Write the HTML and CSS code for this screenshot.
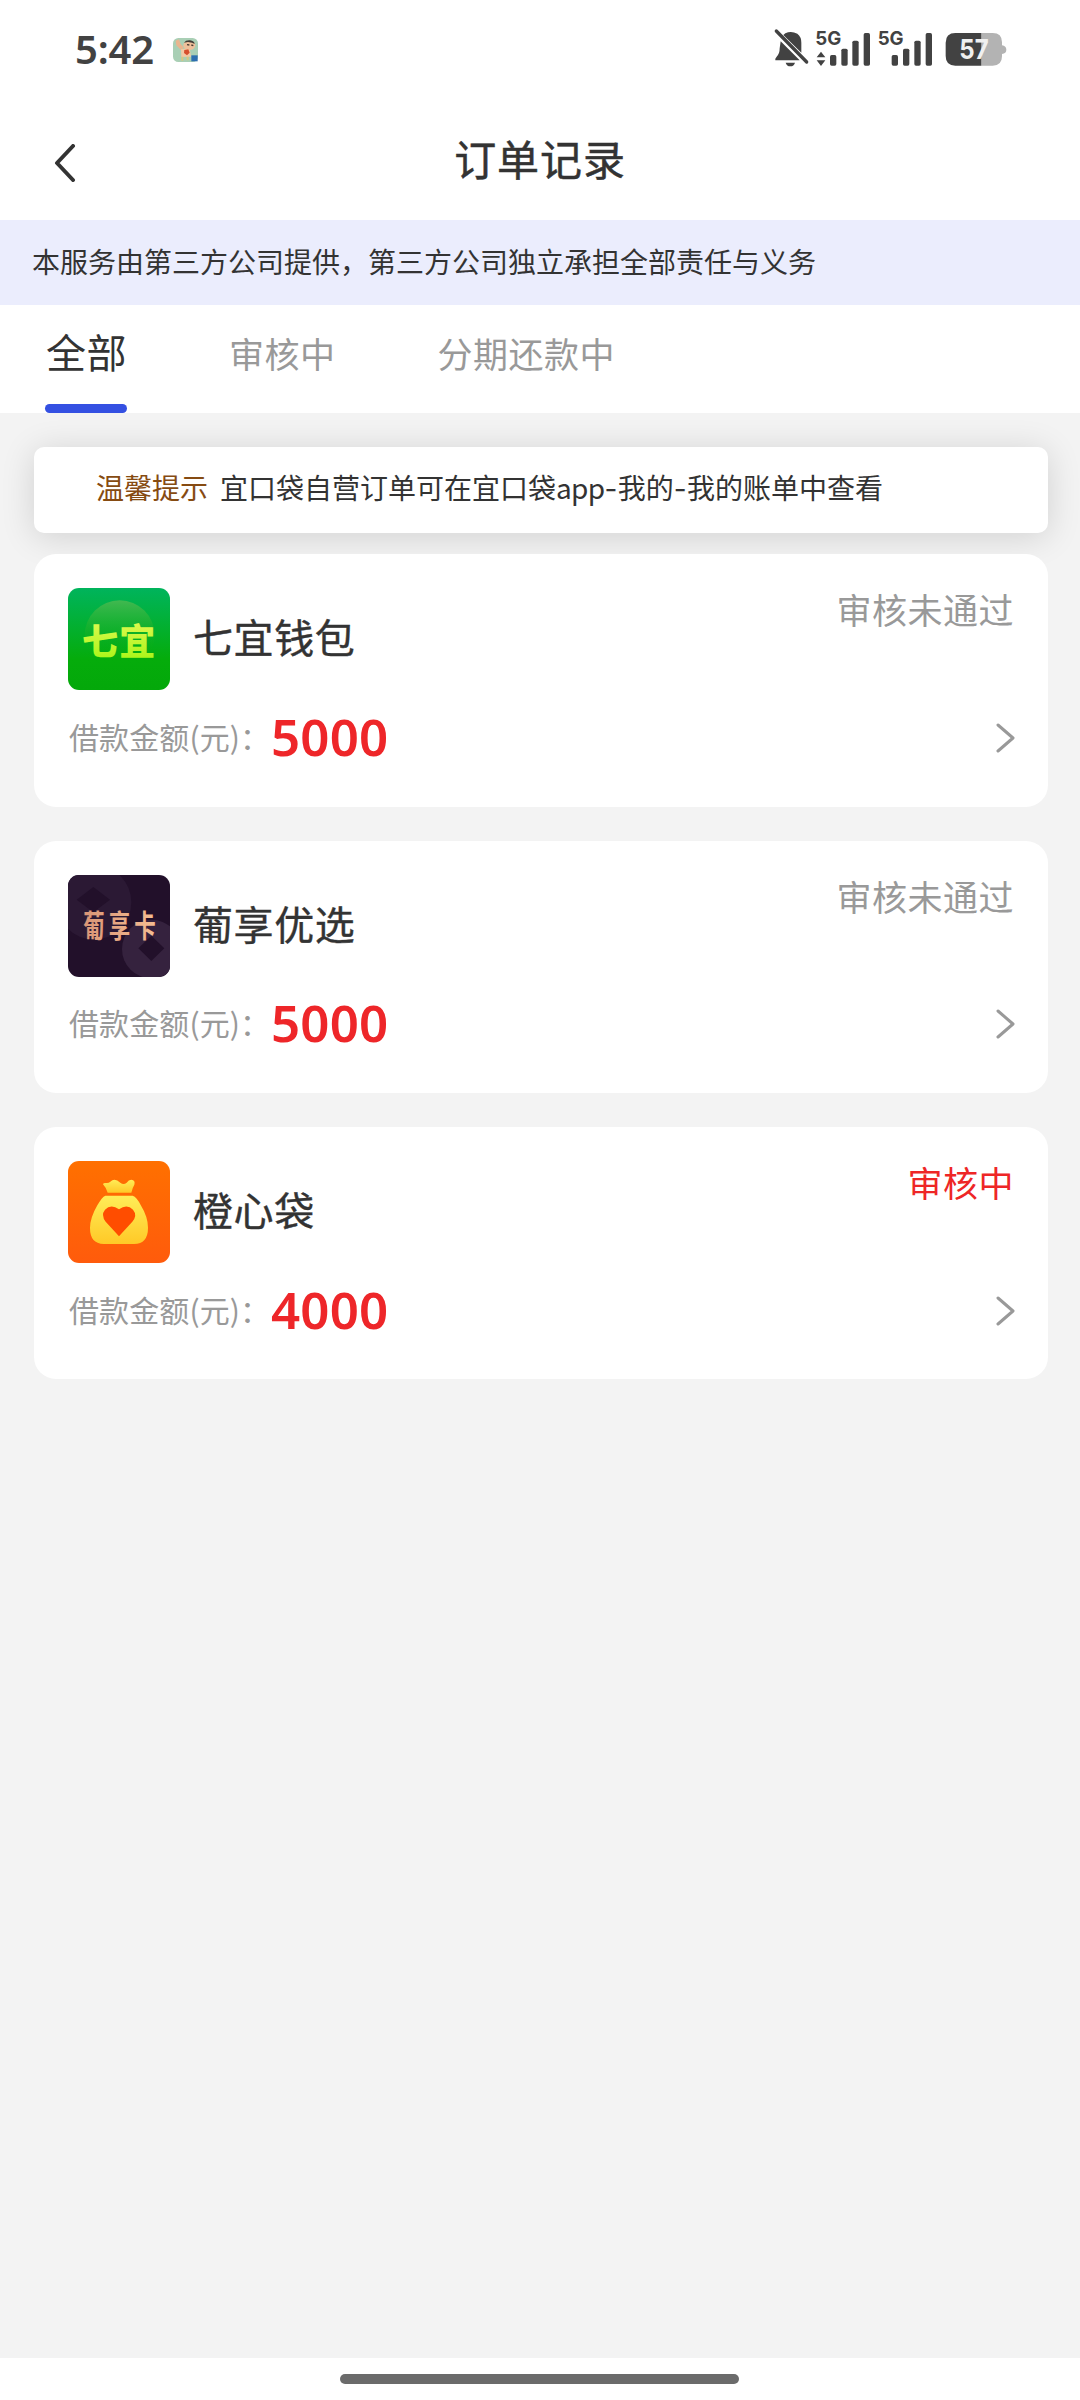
FILE: index.html
```html
<!DOCTYPE html>
<html lang="zh-CN">
<head>
<meta charset="utf-8">
<title>订单记录</title>
<link rel="stylesheet" href="styles.css">
</head>
<body>
<div class="status-bar">
  <span class="time">5:42</span>
  <svg class="app-badge" viewBox="0 0 75 72">
    <rect width="75" height="72" rx="16" fill="#a9cfb5"/>
    <path d="M8 8l10-4 5 14 9 10-6 10L10 22z" fill="#e9b58f"/>
    <ellipse cx="49" cy="22" rx="18" ry="14" fill="#efc09b"/>
    <path d="M33 14Q38 6 51 7q13 2 14 11l-8-4-12-2z" fill="#423c36"/>
    <path d="M42 20l7 1M55 21l6 2" stroke="#4a3b32" stroke-width="4"/>
    <path d="M24 34q15-4 27 2l3 20-29 1z" fill="#f2c9a4"/>
    <path d="M34 36l12-2 4 10-8 8-9-7z" fill="#d64f2c"/>
    <path d="M28 56v12M44 56v11" stroke="#d8c77e" stroke-width="6"/>
    <rect x="55" y="52" width="19" height="18" fill="#2d6fb0"/>
  </svg>
  <svg class="system-icons" viewBox="0 0 840 240">
    <g fill="#424242">
      <path d="M106 70q17-9 36 1 12 9 12 27v30L100 75zM92 94l57 57H76q-2-5 4-11 9-8 9-25zM107 158h28q-3 11-14 11t-14-11z"/>
      <path d="M79 63l91 93" stroke="#424242" stroke-width="10" stroke-linecap="round"/>
      <path d="M213 125l13 17h-26zM213 168l13-17h-26z"/>
      <rect x="240" y="135" width="19" height="32" rx="5"/>
      <rect x="274" y="116" width="19" height="51" rx="5"/>
      <rect x="307" y="92" width="19" height="75" rx="5"/>
      <rect x="341" y="69" width="19" height="98" rx="5"/>
      <rect x="425" y="135" width="19" height="32" rx="5"/>
      <rect x="459" y="116" width="19" height="51" rx="5"/>
      <rect x="493" y="92" width="19" height="75" rx="5"/>
      <rect x="527" y="69" width="19" height="98" rx="5"/>
      <text class="network" x="196" y="104" textLength="78" lengthAdjust="spacingAndGlyphs">5G</text>
      <text class="network" x="383" y="104" textLength="78" lengthAdjust="spacingAndGlyphs">5G</text>
    </g>
    <path d="M694 69h34q28 0 28 28v9q13 2 13 13t-13 13v7q0 28-28 28h-34z" fill="#b3b3b3"/>
    <path d="M694 69v98h-78q-29 0-29-29V98q0-29 29-29z" fill="#424242"/>
    <text class="battery-level" x="628" y="148" textLength="88" lengthAdjust="spacingAndGlyphs">57</text>
  </svg>
</div>
<header class="nav">
  <svg class="back" viewBox="0 0 22 38"><path d="M19 2L3 19l16 17"/></svg>
  <h1 class="title">订单记录</h1>
</header>
<div class="notice">本服务由第三方公司提供，第三方公司独立承担全部责任与义务</div>
<nav class="tabs">
  <a class="tab tab-active">全部</a>
  <a class="tab">审核中</a>
  <a class="tab">分期还款中</a>
</nav>
<main class="content">
  <div class="tip"><span class="tip-label">温馨提示</span><span>宜口袋自营订单可在宜口袋<span class="latin">app</span><span class="dash">-</span>我的<span class="dash">-</span>我的账单中查看</span></div>
  <section class="card">
    <div class="card-head">
      <svg class="logo" viewBox="0 0 306 306">
        <defs>
          <linearGradient id="green" x2="0" y2="1"><stop stop-color="#00b45c"/><stop offset=".7" stop-color="#05ac0b"/><stop offset="1" stop-color="#04a80a"/></linearGradient>
          <linearGradient id="halo" x2="0" y2="1"><stop stop-color="#42b850"/><stop offset=".75" stop-color="#09ad0c" stop-opacity="0"/></linearGradient>
          <linearGradient id="lime" x2="0" y2="1"><stop stop-color="#e9f95c"/><stop offset="1" stop-color="#a2f510"/></linearGradient>
        </defs>
        <rect width="306" height="306" fill="url(#green)"/>
        <circle cx="155" cy="142" r="105" fill="url(#halo)"/>
        <text class="logo-qiyi" x="42" y="201" textLength="220" fill="url(#lime)">七宜</text>
      </svg>
      <h2 class="name">七宜钱包</h2>
      <span class="status">审核未通过</span>
    </div>
    <div class="card-row">
      <span class="label">借款金额(元)：</span><strong class="amount">5000</strong>
      <svg class="chevron" viewBox="0 0 20 32"><path d="M2 3l15 13L2 29"/></svg>
    </div>
  </section>
  <section class="card">
    <div class="card-head">
      <svg class="logo" viewBox="0 0 306 306">
        <defs><linearGradient id="copper"><stop stop-color="#d99576"/><stop offset="1" stop-color="#f5bd92"/></linearGradient></defs>
        <rect width="306" height="306" fill="#22102a"/>
        <circle cx="78" cy="82" r="112" fill="#2b1934"/>
        <path d="M76 36l50 38-50 38-50-38z" fill="#22102a"/>
        <circle cx="250" cy="222" r="88" fill="#35223e"/>
        <path d="M250 182l39 38-39 38-39-38z" fill="#22102a"/>
        <text class="logo-pu" transform="translate(46 187) scale(.7 1)" textLength="310" fill="url(#copper)">葡享卡</text>
      </svg>
      <h2 class="name">葡享优选</h2>
      <span class="status">审核未通过</span>
    </div>
    <div class="card-row">
      <span class="label">借款金额(元)：</span><strong class="amount">5000</strong>
      <svg class="chevron" viewBox="0 0 20 32"><path d="M2 3l15 13L2 29"/></svg>
    </div>
  </section>
  <section class="card">
    <div class="card-head">
      <svg class="logo" viewBox="0 0 306 306">
        <defs>
          <linearGradient id="orange" x2="0" y2="1"><stop stop-color="#ff7000"/><stop offset="1" stop-color="#ff5b0c"/></linearGradient>
          <linearGradient id="gold" x2="0" y2="1"><stop stop-color="#ffed58"/><stop offset="1" stop-color="#ffc927"/></linearGradient>
        </defs>
        <rect width="306" height="306" fill="url(#orange)"/>
        <path d="M119 95h71q3-14 9-24 4-14-9-15-8 0-14 9-9 8-19 0-17-16-30-3-5 5-13 4-8-1-9 4 8 8 14 25z" fill="url(#gold)"/>
        <path d="M112 104h82q12 4 24 28 22 36 22 68 0 48-42 49h-91q-41-1-41-48 0-30 22-68 14-25 24-29z" fill="url(#gold)"/>
        <path d="M153 226l-40-44q-15-20-2-36 18-18 42-1 24-17 42 1 14 17-2 36z" fill="#ff4d00"/>
      </svg>
      <h2 class="name">橙心袋</h2>
      <span class="status status-pending">审核中</span>
    </div>
    <div class="card-row">
      <span class="label">借款金额(元)：</span><strong class="amount">4000</strong>
      <svg class="chevron" viewBox="0 0 20 32"><path d="M2 3l15 13L2 29"/></svg>
    </div>
  </section>
</main>
<footer class="home-bar"><div class="home-handle"></div></footer>
</body>
</html>
```
FILE: styles.css
```css
* { box-sizing: border-box; }
body {
  margin: 0;
  width: 1080px;
  height: 2400px;
  display: flex;
  flex-direction: column;
  background: #fff;
  color: #333;
  font-family: "Noto Sans CJK SC", sans-serif;
  overflow: hidden;
}
svg { display: block; flex: none; }
.status-bar { height: 100px; display: flex; align-items: flex-start; padding: 10px 50px 0 75px; }
.time { width: 98px; font: 600 40px/78px "Noto Sans", sans-serif; letter-spacing: -.2px; color: #424242; }
.app-badge { width: 25px; height: 24px; margin-top: 28px; }
.system-icons { width: 280px; height: 80px; margin-left: auto; }
.network { font: 700 57px Inter, sans-serif; }
.battery-level { font: 700 82px Inter, sans-serif; fill: #f0f0f0; }
.nav { height: 120px; display: grid; grid-template-columns: 80px 1fr 80px; align-items: center; }
.back { width: 22px; height: 38px; margin: 6px 0 0 54px; }
.back path { fill: none; stroke: #333; stroke-width: 4; stroke-linecap: round; stroke-linejoin: round; }
.title { margin: 0 0 4px; text-align: center; font-size: 42px; font-weight: 400; line-height: 116px; letter-spacing: .9px; -webkit-text-stroke: .5px #333; }
.notice { height: 85px; padding-left: 32px; background: #ebedfd; font-size: 28px; line-height: 82px; }
.tabs { height: 108px; display: flex; align-items: stretch; padding-left: 45px; gap: 102px; }
.tab { font-size: 35px; line-height: 95px; letter-spacing: .5px; color: #999; }
.tab-active { width: 82px; font-size: 40px; line-height: 92px; letter-spacing: .6px; text-indent: 1px; color: #333; display: flex; flex-direction: column; justify-content: space-between; white-space: nowrap; }
.tab-active::after { content: ""; height: 9px; border-radius: 4.5px; background: #3450e2; }
.content { flex: 1; background: #f3f3f3; padding: 34px 32px 0 34px; }
.tip { height: 86px; margin-bottom: 21px; padding-left: 62px; display: flex; gap: 12px; border-radius: 10px; background: #fff; box-shadow: 0 4px 34px rgba(0,0,0,.14); font-size: 28px; line-height: 81px; white-space: nowrap; }
.tip-label { color: #864b12; }
.latin { letter-spacing: -.7px; }
.dash { font-family: Inter, sans-serif; display: inline-block; width: 13.3px; }
.card { height: 252.5px; margin-bottom: 34px; padding: 34px 34px 0; border-radius: 22px; background: #fff; position: relative; }
.card:last-child { height: 251.5px; }
.card-head { height: 102px; display: flex; align-items: flex-start; }
.logo { width: 102px; height: 102px; border-radius: 11px; }
.logo-qiyi { font: 900 108px "Noto Sans CJK SC", sans-serif; }
.logo-pu { font: 700 92px "Noto Sans CJK SC", sans-serif; }
.name { margin: 0 auto 0 23px; font-size: 40px; font-weight: 400; line-height: 97px; letter-spacing: .6px; -webkit-text-stroke: .4px #333; }
.status { font-size: 35px; line-height: 41px; letter-spacing: .5px; color: #999; }
.status-pending { color: #ee2626; }
.card-row { display: flex; align-items: center; height: 95px; }
.label { width: 202px; margin: -4px 0 0 1px; font-size: 30px; line-height: 92px; letter-spacing: .1px; color: #999; white-space: nowrap; }
.amount { margin-top: -4px; font: 600 51px/94px "Noto Sans", sans-serif; letter-spacing: .2px; color: #ee2629; }
.chevron { width: 20px; height: 32px; margin-left: auto; margin-right: -2px; }
.chevron path { fill: none; stroke: #999; stroke-width: 3; stroke-linecap: round; stroke-linejoin: round; }
.home-bar { height: 42px; background: #fff; padding: 16px 2px 0 0; }
.home-handle { width: 399px; height: 10px; margin: 0 auto; border-radius: 5px; background: #6b6b6b; }
```
